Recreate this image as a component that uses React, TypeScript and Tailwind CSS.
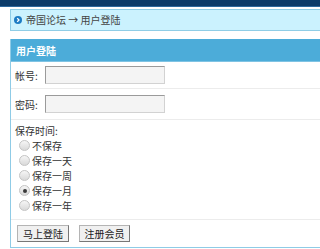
import { useState } from 'react';

const SAVE_OPTIONS = ['不保存', '保存一天', '保存一周', '保存一月', '保存一年'];

function Radio({ checked }: { checked: boolean }) {
  return (
    <span className="inline-flex w-[11px] h-[11px] rounded-full border border-[#c4c4c4] bg-gradient-to-b from-[#f6f6f6] to-[#d9d9d9] items-center justify-center">
      {checked && <span className="w-[4px] h-[4px] rounded-full bg-[#3a3a3a]" />}
    </span>
  );
}

export default function App() {
  const [saveIdx, setSaveIdx] = useState(3);

  return (
    <div className="w-full overflow-hidden bg-white text-[10px] text-[#333] font-['Noto_Sans_CJK_SC','Noto_Sans',sans-serif]">
      {/* top strip */}
      <div className="h-[7px] bg-[#0c3b69] border-b border-[#2d679c]" />

      <div className="w-[700px] pl-[10px] pt-[2px]">
        {/* breadcrumb */}
        <div className="h-[22px] flex items-center gap-[4px] pl-[3px] bg-[#cbf2fe] border border-[#8fcde6]">
          <svg width="8" height="8" viewBox="0 0 9 9">
            <circle cx="4.5" cy="4.5" r="4.5" fill="#1d7cc4" />
            <path d="M3.6 2.4 L5.6 4.5 L3.6 6.6" stroke="#fff" strokeWidth="1.5" fill="none" />
          </svg>
          <span className="leading-none text-[#444]">帝国论坛 → 用户登陆</span>
        </div>

        {/* login panel */}
        <div className="mt-[8px] border border-[#8fcbe6] border-t-0">
          <div className="h-[23px] flex items-center pl-[5px] bg-[#4cacd9] border-b border-[#7fc3e3] text-white font-bold">
            用户登陆
          </div>

          <div className="h-[27px] flex items-center pl-[4px] border-b border-[#ececec]">
            <span className="w-[30px]">帐号:</span>
            <input className="w-[120px] h-[18px] bg-[#f4f4f4] border border-[#d2d2d2] border-t-[#9a9a9a] border-l-[#9a9a9a] outline-none" />
          </div>

          <div className="h-[31px] flex items-center pl-[4px] border-b border-[#ececec]">
            <span className="w-[30px]">密码:</span>
            <input type="password" className="w-[120px] h-[18px] bg-[#f4f4f4] border border-[#d2d2d2] border-t-[#9a9a9a] border-l-[#9a9a9a] outline-none" />
          </div>

          <div className="pl-[4px] pt-[4px] pb-[6px] border-b border-[#ececec]">
            <div className="h-[14px] leading-[14px]">保存时间:</div>
            {SAVE_OPTIONS.map((label, i) => (
              <div
                key={label}
                className="h-[15px] flex items-center gap-[2px] pl-[4px] cursor-pointer"
                onClick={() => setSaveIdx(i)}
              >
                <Radio checked={saveIdx === i} />
                <span className="leading-none">{label}</span>
              </div>
            ))}
          </div>

          <div className="h-[27px] flex items-center gap-[10px] pl-[6px]">
            <button className="w-[52px] h-[17px] leading-none bg-[#f0f0f0] border border-[#b4b4b4] border-r-[#777] border-b-[#777] text-[#222]">
              马上登陆
            </button>
            <button className="w-[51px] h-[17px] leading-none bg-[#f0f0f0] border border-[#b4b4b4] border-r-[#777] border-b-[#777] text-[#222]">
              注册会员
            </button>
          </div>
        </div>
      </div>
    </div>
  );
}
